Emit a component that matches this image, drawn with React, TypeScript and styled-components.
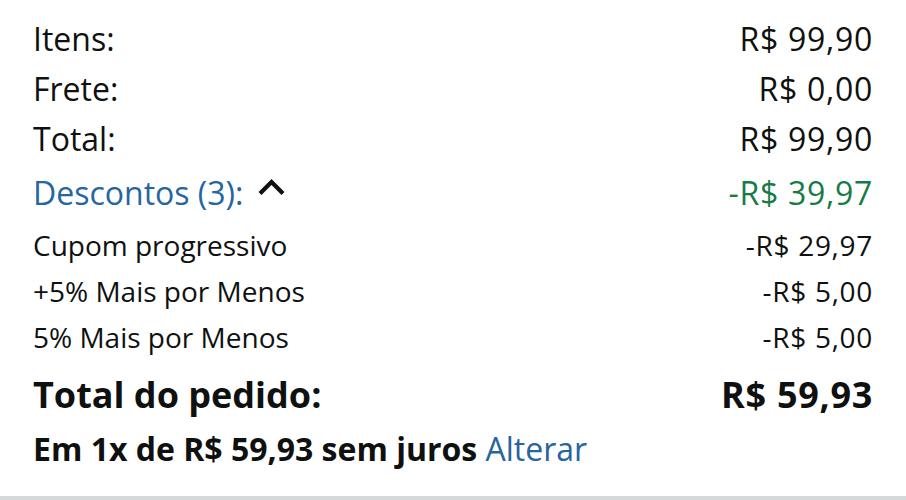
import React from "react";
import styled, { createGlobalStyle } from "styled-components";

const Global = createGlobalStyle`
  html, body { margin: 0; padding: 0; background: #ffffff; }
  body { font-family: "Open Sans", "Noto Sans", sans-serif; color: #0f1111; }
`;

const Page = styled.div`
  width: 906px;
  height: 500px;
  display: flex;
  flex-direction: column;
  box-sizing: border-box;
  overflow: hidden;
`;

const Summary = styled.div`
  display: flex;
  flex-direction: column;
  padding: 14px 33px 0 33px;
  flex: 1;
`;

const Row = styled.div<{ $size: number; $lh: number; $mt?: number; $bold?: boolean }>`
  display: flex;
  justify-content: space-between;
  align-items: baseline;
  font-size: ${(p) => p.$size}px;
  line-height: ${(p) => p.$lh}px;
  margin-top: ${(p) => p.$mt ?? 0}px;
  font-weight: ${(p) => (p.$bold ? 700 : 400)};
`;

const Label = styled.span<{ $tone?: "link" }>`
  display: inline-flex;
  align-items: center;
  white-space: nowrap;
  color: ${(p) => (p.$tone === "link" ? "#2565a2" : "#0f1111")};
`;

const Amount = styled.span<{ $tone?: "save" }>`
  letter-spacing: 0.7px;
  color: ${(p) => (p.$tone === "save" ? "#157c48" : "#0f1111")};
`;

const Chevron = styled.svg`
  width: 27px;
  height: 17px;
  margin-left: 15px;
  margin-top: -14px;
`;

const Link = styled.span`
  color: #2565a2;
  font-weight: 400;
`;

const Divider = styled.div`
  height: 4px;
  background: #d5d9d9;
`;

const main = [
  { label: "Itens:", value: "R$ 99,90" },
  { label: "Frete:", value: "R$ 0,00" },
  { label: "Total:", value: "R$ 99,90" },
];

const discounts = [
  { label: "Cupom progressivo", value: "-R$ 29,97" },
  { label: "+5% Mais por Menos", value: "-R$ 5,00" },
  { label: "5% Mais por Menos", value: "-R$ 5,00" },
];

export default function App() {
  return (
    <>
      <Global />
      <Page>
        <Summary>
          {main.map((r) => (
            <Row key={r.label} $size={32} $lh={50}>
              <Label>{r.label}</Label>
              <Amount>{r.value}</Amount>
            </Row>
          ))}
          <Row $size={32} $lh={50} $mt={4}>
            <Label $tone="link">
              Descontos (3):
              <Chevron viewBox="0 0 27 17">
                <polyline
                  points="3.5,14 13.5,4 23.5,14"
                  fill="none"
                  stroke="#0f1111"
                  strokeWidth="4.2"
                  strokeLinecap="square"
                />
              </Chevron>
            </Label>
            <Amount $tone="save">-R$ 39,97</Amount>
          </Row>
          {discounts.map((r, i) => (
            <Row key={r.label} $size={28} $lh={46} $mt={i === 0 ? 4 : 0}>
              <Label>{r.label}</Label>
              <Amount>{r.value}</Amount>
            </Row>
          ))}
          <Row $size={36} $lh={50} $mt={10} $bold>
            <Label>Total do pedido:</Label>
            <Amount>R$ 59,93</Amount>
          </Row>
          <Row $size={32} $lh={44} $mt={7} $bold>
            <Label>
              Em 1x de R$ 59,93 sem juros&nbsp;<Link>Alterar</Link>
            </Label>
          </Row>
        </Summary>
        <Divider />
      </Page>
    </>
  );
}
